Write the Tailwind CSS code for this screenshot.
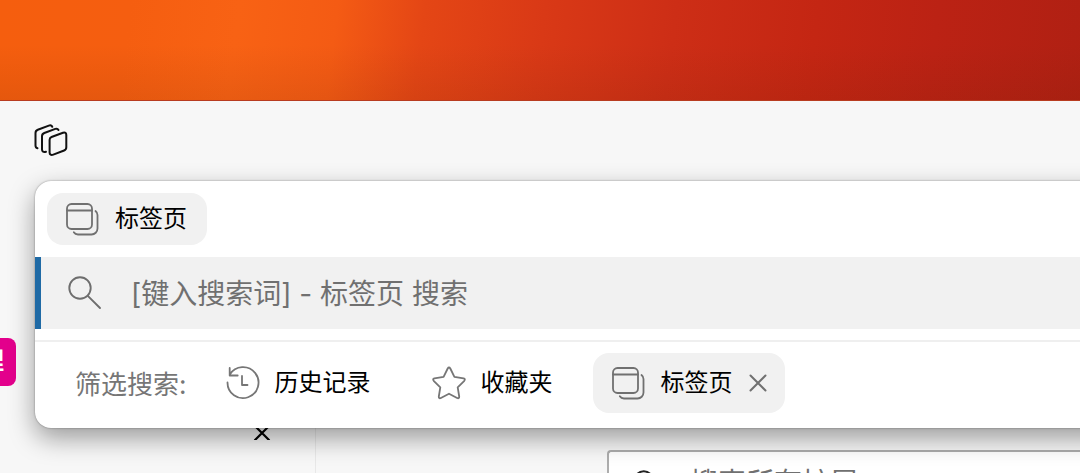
<!DOCTYPE html>
<html lang="zh-CN">
<head>
<meta charset="utf-8">
<meta name="viewport" content="width=device-width, initial-scale=1">
<title>标签页 搜索</title>
<script src="https://cdn.jsdelivr.net/npm/@tailwindcss/browser@4"></script>
</head>
<body class="flex h-screen flex-col overflow-hidden bg-[#f7f7f7] font-['Inter','Noto_Sans_CJK_SC',sans-serif] text-black">
<svg class="hidden" aria-hidden="true">
  <symbol id="tabs" viewBox="0 0 34 34" fill="none" stroke="currentColor" stroke-width="1.8" stroke-linecap="round">
    <rect x="2" y="2" width="25" height="25" rx="4.500"/>
    <path d="M2 8.500h25M30.500 9c1.300 1 2 2.300 2 4v13.500a6 6 0 0 1-6 6H13c-1.800 0-3.300-.8-4.200-2.200"/>
  </symbol>
</svg>
<div class="h-[101px] shrink-0 border-b border-[#b83c20] bg-[linear-gradient(to_bottom,transparent_45%,rgba(90,30,0,0.1)),linear-gradient(97deg,#f55e0e_0%,#f55e10_12%,#f86214_22%,#f45b14_31%,#e44615_39%,#d93916_50%,#cd2e16_62%,#c42613_75%,#bb2214_86%,#b02013_100%)]"></div>
<header class="flex h-20 shrink-0 items-center px-[33px]">
  <button type="button" aria-label="工作区" class="size-9">
    <svg class="size-9" viewBox="0 0 36 36" fill="none" stroke="#111" stroke-width="2" stroke-linecap="round" stroke-linejoin="round">
      <path d="M18.500 14 30 9.800c2.200-.8 3.300.2 3.300 2.200v12.300c0 1.600-.7 2.600-2.200 3.200l-10.800 4.100c-2.200.8-3.700 0-3.700-2.200V16.700c0-1.400.6-2.200 1.900-2.700Z"/>
      <path d="M13 28.700c-2.600.8-4-.2-4-2.200V13.300c0-1.800.7-2.700 2.300-3.300l11-4.100c1.400-.5 2.600-.1 3.200 1"/>
      <path d="M4.500 25.300C3 24.900 2.500 23.900 2.500 22.500V10c0-1.700.7-2.600 2.300-3.200l11-4.200c1.600-.6 3-.2 3.500 1.200"/>
    </svg>
  </button>
</header>
<main class="relative flex min-h-0 grow">
  <aside class="flex w-[316px] shrink-0 flex-col border-r border-[#e8e8e8]">
    <div class="mt-[157px] flex h-12 w-4 justify-end overflow-hidden rounded-r-lg bg-[#e3008c] pr-3 text-2xl leading-[46px] font-bold text-white"><span>理</span></div>
    <button type="button" aria-label="关闭" class="mt-9 mr-11 self-end">
      <svg class="size-[18px]" viewBox="0 0 18 18" stroke="#000" stroke-width="2.200" stroke-linecap="round"><path d="M2 4l14 14M16 4 2 18"/></svg>
    </button>
  </aside>
  <div class="grow overflow-hidden pt-[269px] pl-[291px]">
    <label class="flex h-16 items-center rounded-l-sm border-2 border-r-0 border-[#adadad] bg-white pl-6">
      <svg class="size-7" viewBox="0 0 28 28" fill="none" stroke="#222" stroke-width="2.400"><circle cx="12" cy="12" r="10"/><path d="m19 19 8 8"/></svg>
      <input type="search" aria-label="搜索所有扩展" placeholder="搜索所有扩展" class="ml-8 min-w-0 grow pt-0.5 text-[28px] leading-10 outline-none placeholder:text-[#707070]">
    </label>
  </div>
  <section class="absolute top-0 -right-12 left-[35px] rounded-2xl bg-white shadow-[0_0_2px_rgba(0,0,0,0.4),0_10px_26px_rgba(0,0,0,0.38)]">
    <div class="flex px-3 pt-3 pb-3">
      <div class="flex h-[52px] items-center gap-4 rounded-2xl bg-[#f1f1f1] pr-5 pl-[18px] text-2xl">
        <svg class="size-[34px] text-[#707070]"><use href="#tabs"/></svg>
        <span>标签页</span>
      </div>
    </div>
    <label class="flex h-[72px] items-center border-l-[6px] border-[#1f6aa5] bg-[#f1f1f1] pl-[26px]">
      <svg class="size-9" viewBox="0 0 36 36" fill="none" stroke="#6e6e6e" stroke-width="1.900" stroke-linecap="round"><circle cx="13" cy="13" r="10.700"/><path d="M20.800 20.800 33 33"/></svg>
      <input type="text" aria-label="搜索标签页" placeholder="[键入搜索词] - 标签页 搜索" class="ml-7 min-w-0 grow pt-0.5 text-[28px] leading-10 outline-none placeholder:text-[#707070]">
    </label>
    <div class="mt-[11px] flex h-[88px] items-center border-t-2 border-[#efefef] pb-1 pl-10 text-2xl">
      <span class="pt-1 text-[26px] text-[#767676]">筛选搜索:</span>
      <button type="button" class="ml-[38px] flex items-center gap-[14px]">
        <svg class="size-9" viewBox="0 0 36 36" fill="none" stroke="#767676" stroke-width="1.800" stroke-linecap="round" stroke-linejoin="round"><path d="M4.800 9.500A15.500 15.500 0 1 1 2.500 17.500M4.700 3v7.500h8M17 11v9h5.500"/></svg>
        <span>历史记录</span>
      </button>
      <button type="button" class="ml-[60px] flex items-center gap-[14px]">
        <svg class="size-9" viewBox="0 0 36 36" fill="none" stroke="#767676" stroke-width="1.800" stroke-linejoin="round"><path d="M16.700 3.500q1.300-2 2.600 0l4.100 8.400 9.200 1.400q2.100.6.700 2.500l-6.600 6.500 1.500 9.200q.1 2.400-2.100 1.500L18 28.700 9.900 33q-2.200.9-2.100-1.500l1.500-9.200-6.600-6.500q-1.400-1.900.7-2.500l9.200-1.400Z"/></svg>
        <span>收藏夹</span>
      </button>
      <button type="button" aria-label="移除标签页筛选" class="ml-10 flex h-[60px] items-center rounded-2xl bg-[#f1f1f1] px-[18px]">
        <svg class="size-[34px] text-[#707070]"><use href="#tabs"/></svg>
        <span class="ml-4">标签页</span>
        <svg class="ml-4 size-[18px]" viewBox="0 0 18 18" stroke="#707070" stroke-width="2" stroke-linecap="round"><path d="m1.500 1.500 15 15M16.500 1.500l-15 15"/></svg>
      </button>
    </div>
  </section>
</main>
</body>
</html>
